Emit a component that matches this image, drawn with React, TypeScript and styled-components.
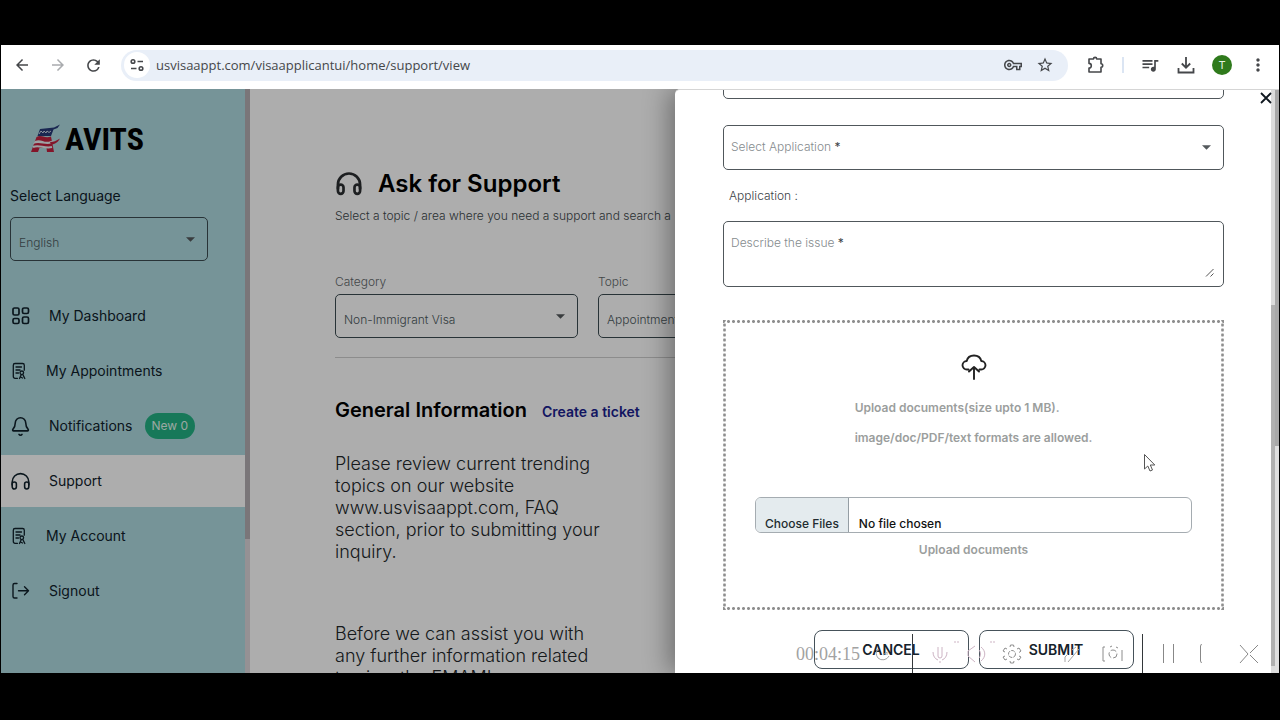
import React from "react";
import styled, { createGlobalStyle } from "styled-components";
import {
  MdArrowBack,
  MdArrowForward,
  MdRefresh,
  MdOutlineVpnKey,
  MdStarBorder,
  MdQueueMusic,
  MdMoreVert,
} from "react-icons/md";
import { Bell } from "lucide-react";

const GlobalStyle = createGlobalStyle`
  *, *::before, *::after { box-sizing: border-box; }
  body { margin: 0; background: #000; font-family: Inter, "Liberation Sans", sans-serif; }
  h1, h2, p, ul { margin: 0; padding: 0; }
  button, input, select, textarea { font-family: inherit; }
`;

const Screen = styled.div`
  display: flex;
  flex-direction: column;
  height: 100vh;
  padding: 45px 1px 47px;
  background: #000;
  overflow: hidden;
`;

/* Browser chrome */
const BrowserBar = styled.header`
  display: flex;
  align-items: center;
  flex: none;
  height: 44px;
  padding: 0 3px 4px 9px;
  background: #fff;
  color: #45474a;
`;
const IconButton = styled.button<{ $muted?: boolean; $w?: number }>`
  display: flex;
  align-items: center;
  justify-content: center;
  flex: none;
  width: ${(p) => p.$w ?? 36}px;
  height: 30px;
  padding: 0;
  border: 0;
  background: none;
  color: ${(p) => (p.$muted ? "#a9abae" : "#45474a")};
`;
const AddressBar = styled.div`
  display: flex;
  align-items: center;
  flex: 1;
  height: 31px;
  margin: 0 10px 0 17px;
  padding: 0 7px 0 3px;
  border-radius: 16px;
  background: #e9eff8;
`;
const SiteInfo = styled.button`
  display: grid;
  place-items: center;
  width: 26px;
  height: 26px;
  padding: 0;
  border: 0;
  border-radius: 50%;
  background: #fff;
`;
const AddressInput = styled.input`
  flex: 1;
  min-width: 0;
  margin-left: 6px;
  padding: 0;
  border: 0;
  background: none;
  color: #45474a;
  font: 13px/20px "Open Sans", "Noto Sans", sans-serif;
`;
const BarRule = styled.span`
  width: 2px;
  height: 16px;
  margin: 0 8px;
  background: #dbe5f3;
`;
const Avatar = styled.button`
  width: 20px;
  height: 20px;
  margin: 0 8px;
  padding: 0;
  border: 0;
  border-radius: 50%;
  background: #2f7a1c;
  color: #e4f0e0;
  font-size: 11px;
`;

/* Page */
const Viewport = styled.div`
  position: relative;
  display: flex;
  flex: 1;
  min-height: 0;
  overflow: hidden;
  background: #fff;
`;
const Sidebar = styled.aside`
  flex: none;
  width: 244px;
  padding-top: 35px;
  background: #afdbe1;
  overflow: hidden;
`;
const Track = styled.div<{ $c: string }>`
  flex: none;
  width: 5px;
  background: ${(p) => p.$c};
`;
const Thumb = styled.div<{ $h: number; $c: string; $top?: number }>`
  height: ${(p) => p.$h}%;
  margin-top: ${(p) => p.$top ?? 0}px;
  background: ${(p) => p.$c};
`;
const Logo = styled.a`
  display: flex;
  align-items: center;
  height: 31px;
  margin-left: 28px;
  gap: 4px;
  color: #000;
  text-decoration: none;
  font: bold 32px/31px "Liberation Sans Narrow", "Roboto Condensed", Roboto, sans-serif;
`;
const LanguageBlock = styled.div`
  display: flex;
  flex-direction: column;
  gap: 11px;
  padding: 31px 37px 0 9px;
`;
const LanguageLabel = styled.label`
  color: #10212b;
  font-size: 14px;
  line-height: 20px;
`;

const SelectBox = styled.div`
  position: relative;
  display: flex;
`;
const Select = styled.select<{ $h?: number; $edge?: string }>`
  appearance: none;
  width: 100%;
  height: ${(p) => p.$h ?? 44}px;
  padding: 6px 32px 0 8px;
  border: 1px solid ${(p) => p.$edge ?? "#3c4c52"};
  border-radius: 5px;
  background: none;
  color: #4d5a60;
  font-size: 12px;
  font-weight: 300;
`;
const Caret = styled.svg`
  position: absolute;
  top: 20px;
  right: 13px;
  width: 9px;
  height: 5px;
  fill: #54595c;
  pointer-events: none;
`;

const Nav = styled.nav`
  display: flex;
  flex-direction: column;
  gap: 3px;
  margin-top: 29px;
`;
const NavItem = styled.a<{ $active?: boolean }>`
  display: flex;
  align-items: center;
  gap: 18px;
  height: 52px;
  padding-left: 9px;
  background: ${(p) => (p.$active ? "#fff" : "none")};
  color: #10212b;
  font-size: 14px;
  line-height: 20px;
  text-decoration: none;
`;
const Badge = styled.span`
  margin-left: -6px;
  padding: 3px 7px;
  border-radius: 13px;
  background: #23b283;
  color: #e4f7f0;
  font-size: 12px;
`;

const Main = styled.main`
  flex: 1;
  min-width: 0;
  padding: 80px 5px 0 85px;
  overflow: hidden;
`;
const TitleRow = styled.div`
  display: flex;
  align-items: center;
  gap: 15px;
  color: #2c2f31;
`;
const Title = styled.h1`
  color: #000;
  font-size: 24px;
  font-weight: 600;
  line-height: 30px;
`;
const Intro = styled.p`
  margin-top: 8px;
  color: #40484b;
  font-size: 12px;
  font-weight: 300;
  line-height: 18px;
  white-space: nowrap;
`;
const Filters = styled.div`
  display: flex;
  gap: 20px;
  margin-top: 48px;
  padding-bottom: 19px;
  border-bottom: 1px solid #cfcfcf;
`;
const Filter = styled.div`
  width: 243px;
  display: flex;
  flex-direction: column;
  gap: 3px;
`;
const FilterLabel = styled.label`
  color: #63696c;
  font-size: 12px;
  font-weight: 300;
  line-height: 18px;
`;
const InfoHead = styled.div`
  display: flex;
  align-items: baseline;
  gap: 15px;
  margin-top: 39px;
`;
const InfoTitle = styled.h2`
  font-size: 20px;
  font-weight: 600;
  line-height: 26px;
`;
const TicketLink = styled.a`
  color: #1b1f8f;
  font-size: 14px;
  font-weight: 600;
  text-decoration: none;
`;
const Paragraph = styled.p<{ $gap: number }>`
  width: 268px;
  margin-top: ${(p) => p.$gap}px;
  color: #22272a;
  font-size: 18px;
  font-weight: 300;
  line-height: 22px;
`;

/* Drawer */
const Backdrop = styled.div`
  position: absolute;
  inset: 0;
  background: rgba(0, 0, 0, 0.32);
`;
const Drawer = styled.section`
  position: absolute;
  top: 0;
  right: 0;
  bottom: 0;
  display: flex;
  width: 604px;
  max-width: 100%;
  border-top: 1px solid #d5d5d5;
  border-radius: 5px 0 0 0;
  background: #fff;
  box-shadow: -6px 0 26px rgba(0, 0, 0, 0.36);
`;
const Form = styled.form`
  flex: 1;
  min-width: 0;
  padding: 0 47px 0 48px;
  overflow: hidden;
`;
const Fields = styled.div`
  display: flex;
  flex-direction: column;
  margin-top: -36px;
`;
const FieldRow = styled.div<{ $gap?: number }>`
  position: relative;
  display: flex;
  margin-top: ${(p) => p.$gap ?? 0}px;
`;
const FieldLabel = styled.label`
  position: absolute;
  top: 13px;
  left: 8px;
  color: #858b8e;
  font-size: 12px;
  font-weight: 300;
  line-height: 18px;
  pointer-events: none;
`;
const Star = styled.span`
  color: #3c4347;
  font-weight: 400;
`;
const PlainText = styled.p`
  margin: 17px 0 16px;
  padding-left: 6px;
  color: #3c4347;
  font-size: 12px;
  font-weight: 300;
  line-height: 18px;
`;
const TextArea = styled.textarea`
  display: block;
  width: 100%;
  height: 66px;
  padding: 13px 8px;
  border: 1px solid #50575b;
  border-radius: 5px;
  background: none;
  resize: none;
`;
const Grip = styled.svg`
  position: absolute;
  right: 10px;
  bottom: 10px;
`;
const dot = "radial-gradient(circle, #8e8e8e 1px, transparent 2px)";
const DropZone = styled.div`
  display: flex;
  flex-direction: column;
  align-items: center;
  height: 290px;
  margin-top: 33px;
  padding: 33px 32px 0;
  background:
    ${dot} top / 5px 3px round no-repeat,
    ${dot} bottom / 5px 3px round no-repeat,
    ${dot} left / 3px 5px no-repeat round,
    ${dot} right / 3px 5px no-repeat round;
  color: #9b9e9d;
  font-size: 12px;
  font-weight: 600;
  line-height: 18px;
`;
const Hints = styled.div`
  display: flex;
  flex-direction: column;
  gap: 12px;
  margin: 18px 0 50px;
`;
const FileInput = styled.input`
  width: 100%;
  height: 36px;
  border: 1px solid #a5acb1;
  border-radius: 6px;
  color: #111;
  font-size: 12px;
  font-weight: 500;
  line-height: 20px;

  &::file-selector-button {
    height: 34px;
    margin: 0 10px 0 0;
    padding: 18px 9px 0;
    border: 0;
    border-right: 1px solid #959ea4;
    background: #e4ebee;
    color: #222b30;
    font: 500 12px/16px Inter, sans-serif;
  }
`;
const FileLabel = styled.label`
  margin-top: 8px;
`;
const Actions = styled.div`
  display: flex;
  justify-content: center;
  gap: 10px;
  margin-top: 20px;
`;
const ActionButton = styled.button`
  width: 155px;
  height: 39px;
  border: 1px solid #46525a;
  border-radius: 8px;
  background: #fff;
  color: #15222b;
  font-size: 14px;
  font-weight: 600;
`;
const CloseButton = styled.button`
  position: absolute;
  top: 1px;
  right: 4px;
  width: 18px;
  height: 16px;
  padding: 0;
  border: 0;
  background: none;
`;
const DrawerTrack = styled.div`
  flex: none;
  width: 4px;
  background: #dcdcdc;
`;
const PageTrack = styled.div`
  flex: none;
  width: 4px;
  background: #dedede;
`;

/* Floating recorder strip */
const Recorder = styled.div`
  position: absolute;
  right: 20px;
  bottom: 0;
  display: grid;
  grid-template-columns: 66px 44px 14px 42px 34px 34px 22px 42px 40px 18px 36px 28px 44px;
  align-items: center;
  justify-items: center;
  height: 39px;
  color: #a6a6a6;
  pointer-events: none;
`;
const Timer = styled.time`
  color: #a2a2a2;
  font: 18px/20px "Liberation Serif", serif;
`;
const Divider = styled.span`
  width: 1px;
  height: 39px;
  background: #33373a;
`;
const Ghost = styled.svg`
  fill: none;
  stroke: currentColor;
  stroke-width: 1;
`;
const PinkGhost = styled(Ghost)`
  color: #cdb4c4;
`;
const EndGhost = styled(Ghost)`
  justify-self: end;
`;
const Pointer = styled.svg`
  position: absolute;
  left: calc(100% - 136px);
  top: 364px;
`;

const Line = styled.svg`
  flex: none;
  fill: none;
  stroke: currentColor;
  stroke-linecap: round;
  stroke-linejoin: round;
`;

const Arrow = () => (
  <Caret viewBox="0 0 10 5" aria-hidden="true">
    <path d="M0 0h10L5 5z" />
  </Caret>
);

const HeadphonesIcon = ({ size, weight }: { size: number; weight: number }) => (
  <Line width={size} height={size} viewBox="0 0 24 24" strokeWidth={weight}>
    <path d="M2.500 16v-3.500a9.500 9.500 0 0 1 19 0V16" />
    <rect x="2.500" y="12.500" width="4.800" height="8" rx="2.400" />
    <rect x="16.700" y="12.500" width="4.800" height="8" rx="2.400" />
  </Line>
);

const DashboardIcon = () => (
  <Line width="21" height="20" viewBox="0 0 21 20" strokeWidth="1.700">
    <rect x="3" y="2" width="6" height="7" rx="1.500" />
    <rect x="12.500" y="2" width="6" height="5.500" rx="1.500" />
    <rect x="3" y="12.500" width="6" height="5" rx="1.500" />
    <rect x="12.500" y="11" width="6" height="6.500" rx="1.500" />
  </Line>
);

const RecordIcon = () => (
  <Line width="18" height="20" viewBox="0 0 18 20" strokeWidth="1.300">
    <path d="M7.500 17.300H5A1.700 1.700 0 0 1 3.300 15.600V4.200A1.700 1.700 0 0 1 5 2.500h7.600a1.700 1.700 0 0 1 1.700 1.700v5M6 6h5.500M6 9h4M6 12h2.500" />
    <circle cx="11.800" cy="11.800" r="1.800" />
    <path d="M9.500 17.500l1.600-3.600M14.800 17.500l-1.800-3.600M10.500 16l2 1" />
  </Line>
);

const SignoutIcon = () => (
  <Line width="21" height="20" viewBox="0 0 21 20" strokeWidth="1.400">
    <path d="M7 2.500H4.500a1.500 1.500 0 0 0-1.500 1.500v11.500A1.500 1.500 0 0 0 4.500 17H7M8.500 9.800h10M14.500 5.800l4 4-4 4" />
  </Line>
);

const FlagMark = () => (
  <svg width="32" height="31" viewBox="0 0 32 31" aria-hidden="true">
    <path d="M11 5l14-1.500 6-3-2.500 3.500-4 1.500L22 12H8.500z" fill="#273a78" />
    <path d="M10 10l2-3 2 2 1-2 2 2 1-2 2 1.500 2-1.500" fill="none" stroke="#c9d5e6" strokeWidth="1" />
    <path d="M7.500 13c5-3 8 2 14.500-.5L25 28h-7l-.5-4h-7L9 28H2z" fill="#c2203f" />
    <path d="M6 17c6-3 9 3 16 0l4-1-3 3c-6 3-12-2-19 1z" fill="#e7edf0" />
    <path d="M4 23c6-3 11 2 19 0" fill="none" stroke="#e7edf0" strokeWidth="2" />
    <path d="M21 18c4 0 6-1 10-3.500-2 3.500-5 6-9 6z" fill="#c2203f" />
  </svg>
);

export default function App() {
  return (
    <>
      <GlobalStyle />
      <Screen>
        <BrowserBar>
          <IconButton $w={24} aria-label="Back"><MdArrowBack size={18} /></IconButton>
          <IconButton $w={48} $muted aria-label="Forward"><MdArrowForward size={18} /></IconButton>
          <IconButton $w={22} aria-label="Reload"><MdRefresh size={19} /></IconButton>
          <AddressBar>
            <SiteInfo aria-label="Site information">
              <svg width="14" height="14" viewBox="0 0 14 14" fill="none" stroke="#45474a" strokeWidth="1.600">
                <circle cx="3" cy="3.500" r="1.800" />
                <path d="M7.500 3.500H13M1 10.500h5.500" />
                <circle cx="11" cy="10.500" r="1.800" />
              </svg>
            </SiteInfo>
            <AddressInput aria-label="Address" defaultValue="usvisaappt.com/visaapplicantui/home/support/view" />
            <IconButton $w={32} aria-label="Passwords"><MdOutlineVpnKey size={18} /></IconButton>
            <IconButton $w={32} aria-label="Bookmark"><MdStarBorder size={18} /></IconButton>
          </AddressBar>
          <IconButton aria-label="Extensions">
            <svg width="18" height="18" viewBox="0 0 18 18" fill="none" stroke="currentColor" strokeWidth="1.600" strokeLinejoin="round">
              <path d="M2 3h4.500a1.600 1.600 0 0 1 3.200 0H14v4.800a1.700 1.700 0 0 1 0 3.400V16H2v-4a2.300 2.300 0 0 0 0-4.600z" />
            </svg>
          </IconButton>
          <BarRule />
          <IconButton aria-label="Media"><MdQueueMusic size={20} /></IconButton>
          <IconButton aria-label="Downloads">
            <svg width="18" height="18" viewBox="0 0 18 18" fill="none" stroke="currentColor" strokeWidth="1.800">
              <path d="M9 1v10.500M4.800 7.500L9 11.700l4.200-4.200M1.500 12v4.500h15V12" />
            </svg>
          </IconButton>
          <Avatar aria-label="Profile">T</Avatar>
          <IconButton aria-label="Menu"><MdMoreVert size={20} /></IconButton>
        </BrowserBar>

        <Viewport>
          <Sidebar>
            <Logo href="#home"><FlagMark />AVITS</Logo>
            <LanguageBlock>
              <LanguageLabel htmlFor="language">Select Language</LanguageLabel>
              <SelectBox>
                <Select id="language"><option>English</option></Select>
                <Arrow />
              </SelectBox>
            </LanguageBlock>
            <Nav>
              <NavItem href="#dashboard"><DashboardIcon />My Dashboard</NavItem>
              <NavItem href="#appointments"><RecordIcon />My Appointments</NavItem>
              <NavItem href="#notifications">
                <Bell size={21} strokeWidth={1.800} />Notifications <Badge>New 0</Badge>
              </NavItem>
              <NavItem href="#support" $active><HeadphonesIcon size={21} weight={1.800} />Support</NavItem>
              <NavItem href="#account"><RecordIcon />My Account</NavItem>
              <NavItem href="#signout"><SignoutIcon />Signout</NavItem>
            </Nav>
          </Sidebar>
          <Track $c="#dcd6da"><Thumb $h={77} $c="#b4afb3" /></Track>

          <Main>
            <TitleRow>
              <HeadphonesIcon size={28} weight={2.300} />
              <Title>Ask for Support</Title>
            </TitleRow>
            <Intro>Select a topic / area where you need a support and search a</Intro>
            <Filters>
              <Filter>
                <FilterLabel htmlFor="category">Category</FilterLabel>
                <SelectBox>
                  <Select id="category"><option>Non-Immigrant Visa</option></Select>
                  <Arrow />
                </SelectBox>
              </Filter>
              <Filter>
                <FilterLabel htmlFor="topic">Topic</FilterLabel>
                <SelectBox>
                  <Select id="topic"><option>Appointment</option></Select>
                  <Arrow />
                </SelectBox>
              </Filter>
            </Filters>
            <InfoHead>
              <InfoTitle>General Information</InfoTitle>
              <TicketLink href="#ticket">Create a ticket</TicketLink>
            </InfoHead>
            <Paragraph $gap={30}>
              Please review current trending topics on our website www.usvisaappt.com, FAQ section,
              prior to submitting your inquiry.
            </Paragraph>
            <Paragraph $gap={60}>
              Before we can assist you with any further information related to view the EMAMI,
            </Paragraph>
          </Main>

          <Backdrop />
          <Drawer>
            <Form>
              <Fields>
                <FieldRow><Select aria-label="Topic type" $h={45} $edge="#50575b" /></FieldRow>
                <FieldRow $gap={26}>
                  <Select id="application" $h={45} $edge="#50575b" />
                  <FieldLabel htmlFor="application">Select Application <Star>*</Star></FieldLabel>
                  <Arrow />
                </FieldRow>
                <PlainText>Application :</PlainText>
                <FieldRow>
                  <TextArea id="issue" />
                  <FieldLabel htmlFor="issue">Describe the issue <Star>*</Star></FieldLabel>
                  <Grip width="9" height="9" viewBox="0 0 9 9" stroke="#555" fill="none">
                    <path d="M1 8.500L8.500 1M5.500 8.500l3-3" />
                  </Grip>
                </FieldRow>
                <DropZone>
                  <Line width="28" height="28" viewBox="0 0 28 28" strokeWidth="1.900" color="#222">
                    <path d="M8.500 16.500H7a4.300 4.300 0 0 1-4.500-4.200A4.300 4.300 0 0 1 6.700 8C7.500 4.500 10.500 2.500 14 2.500S20.500 4.500 21.300 8a4.300 4.300 0 0 1 4.200 4.300 4.300 4.300 0 0 1-4.500 4.200h-1.500M14 26V14.500M9 18.500l5-4.500 5 4.500" />
                  </Line>
                  <Hints>
                    <p>Upload documents(size upto 1 MB).</p>
                    <p>image/doc/PDF/text formats are allowed.</p>
                  </Hints>
                  <FileInput id="documents" type="file" multiple />
                  <FileLabel htmlFor="documents">Upload documents</FileLabel>
                </DropZone>
                <Actions>
                  <ActionButton type="button">CANCEL</ActionButton>
                  <ActionButton type="button">SUBMIT</ActionButton>
                </Actions>
              </Fields>
            </Form>
            <CloseButton aria-label="Close">
              <svg width="14" height="14" viewBox="0 0 14 14" stroke="#101820" strokeWidth="1.800">
                <path d="M2 2l10 10M12 2L2 12" />
              </svg>
            </CloseButton>
            <DrawerTrack><Thumb $top={215} $h={62} $c="#b0b0b0" /></DrawerTrack>
            <PageTrack><Thumb $h={61} $c="#a8a8a8" /></PageTrack>
          </Drawer>

          <Recorder aria-hidden="true">
            <Timer>00:04:15</Timer>
            <Ghost width="16" height="16" viewBox="0 0 16 16"><path d="M3 3a7 7 0 0 0 0 9 7 7 0 0 0 11-2M8 9l4-3v3" /></Ghost>
            <Divider />
            <PinkGhost width="38" height="28" viewBox="0 0 38 28">
              <path d="M17 7v9a2 2 0 0 0 4 0V7M12 12c0 4 2 7 5 8M26 12c0 4-2 7-5 8M19 21v2M34 1v2M37 1v2" />
            </PinkGhost>
            <PinkGhost width="34" height="28" viewBox="0 0 34 28">
              <path d="M7 11v5l7 6M7 11l7-5M18 10c2 2 2 6 0 8M20 7c5 4 5 10 0 14M30 1v2M33 1v2" />
            </PinkGhost>
            <Ghost width="20" height="20" viewBox="0 0 20 20" color="#8c8c8c">
              <circle cx="10" cy="10" r="3.500" strokeDasharray="4 1" />
              <path d="M8 3l.5-2h3l.5 2M15 5l2-1 2 3-2 1.500M17 12l2 1-2 3-2-1M12 17l-.5 2h-3L8 17M5 15l-2 1-2-3 2-1M3 8L1 7l2-3 2 1" />
            </Ghost>
            <span />
            <Ghost width="18" height="18" viewBox="0 0 18 18"><path d="M2 17v-5l3-3M5 17l11-13M9 5l4-3" /></Ghost>
            <Ghost width="24" height="18" viewBox="0 0 24 18" color="#8c8c8c">
              <path d="M4 2H2v14h2M21 5v11M9 2l2-1M15 2l2 1" />
              <circle cx="12" cy="9" r="4" strokeDasharray="6 2" />
            </Ghost>
            <Divider />
            <Ghost width="14" height="20" viewBox="0 0 14 20" color="#888"><path d="M1.500 0v19M11.500 0v19" /></Ghost>
            <Ghost width="6" height="20" viewBox="0 0 6 20" color="#888"><path d="M3.500 0l-1 2v15l1 2" /></Ghost>
            <EndGhost width="20" height="20" viewBox="0 0 20 20" color="#888">
              <path d="M1 1l8 9-8 9M19 1l-8 8M11 11l8 8" />
            </EndGhost>
          </Recorder>

          <Pointer width="14" height="20" viewBox="0 0 14 20" fill="#fff" stroke="#555">
            <path d="M1.500 1.500v14.500l3.300-3 2.200 5 2.500-1-2.200-5h4.500z" />
          </Pointer>
        </Viewport>
      </Screen>
    </>
  );
}
